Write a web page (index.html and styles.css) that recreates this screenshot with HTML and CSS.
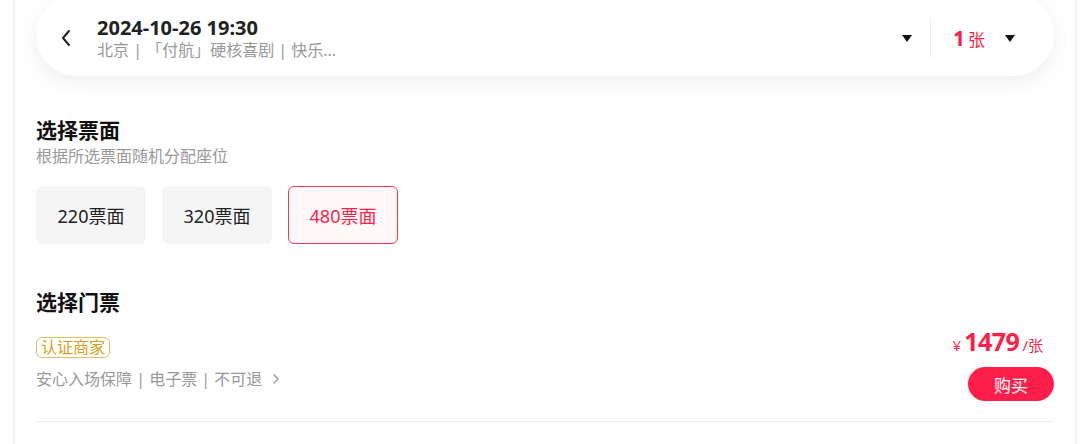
FILE: index.html
```html
<!DOCTYPE html>
<html lang="zh-CN">
<head>
  <meta charset="UTF-8">
  <title>选择票面</title>
  <link rel="stylesheet" href="styles.css">
</head>
<body>
  <div class="panel">
    <div class="top-card">
      <span class="back">
        <svg width="12" height="18" viewBox="0 0 12 18"><path d="M9 2 L3 9 L9 16" fill="none" stroke="#222" stroke-width="2" stroke-linecap="round" stroke-linejoin="round"/></svg>
      </span>
      <div class="show-info">
        <div class="show-time">2024-10-26 19:30</div>
        <div class="show-desc">北京 | 「付航」硬核喜剧 | 快乐...</div>
      </div>
      <span class="caret"></span>
      <span class="divider"></span>
      <div class="count"><b>1</b>张</div>
      <span class="caret"></span>
    </div>

    <div class="section">
      <h3>选择票面</h3>
      <p class="hint">根据所选票面随机分配座位</p>
      <div class="faces">
        <div class="face">220票面</div>
        <div class="face">320票面</div>
        <div class="face active">480票面</div>
      </div>
    </div>

    <div class="section tickets">
      <h3>选择门票</h3>
      <div class="ticket">
        <div class="ticket-left">
          <span class="badge">认证商家</span>
          <div class="terms">安心入场保障 | 电子票 | 不可退
            <svg width="8" height="12" viewBox="0 0 8 12"><path d="M2 2 L6 6 L2 10" fill="none" stroke="#999" stroke-width="1.4" stroke-linecap="round" stroke-linejoin="round"/></svg>
          </div>
        </div>
        <div class="ticket-right">
          <div class="price"><span class="yen">¥</span><b>1479</b><span class="unit">/张</span></div>
          <button class="buy">购买</button>
        </div>
      </div>
    </div>
  </div>
</body>
</html>
```

FILE: styles.css
```css
body { margin: 0; background: #fff; font-family: "Noto Sans", "Noto Sans CJK SC", sans-serif; color: #222; }
.panel { margin-left: 13px; width: 1018px; min-height: 444px; padding: 0 21px; border-left: 2px solid #f3f3f3; border-right: 2px solid #f3f3f3; overflow: hidden; }

.top-card { display: flex; align-items: center; height: 82px; margin-top: -6px; padding: 6px 39px 0 24px; box-sizing: border-box; background: #fff; border-radius: 41px; box-shadow: 0 6px 22px rgba(0,0,0,0.07); }
.back { display: flex; width: 12px; margin-right: 25px; }
.show-info { flex: 1; }
.show-time { font-size: 20px; font-weight: 700; line-height: 23px; color: #222; }
.show-desc { font-size: 16px; line-height: 22px; color: #999; }
.caret { width: 0; height: 0; border-left: 5px solid transparent; border-right: 5px solid transparent; border-top: 7px solid #111; }
.divider { width: 1px; height: 40px; background: #eee; margin: 0 22px 0 18px; }
.count { color: #ff1e4a; font-size: 17px; margin-right: 20px; }
.count b { font-size: 21px; font-weight: 700; margin-right: 3px; }

.section h3 { margin: 0; font-size: 21px; font-weight: 700; line-height: 28px; color: #111; }
.section { padding-top: 40px; }
.hint { margin: 0; font-size: 16px; line-height: 24px; color: #999; }
.faces { display: flex; gap: 16px; margin-top: 18px; }
.face { width: 110px; height: 58px; display: flex; align-items: center; justify-content: center; background: #f5f5f5; border-radius: 6px; font-size: 18px; color: #222; box-sizing: border-box; }
.face.active { background: #fff8f9; border: 1.5px solid #ff3355; color: #ff1e4a; }

.tickets { padding-top: 44px; }
.ticket { display: flex; justify-content: space-between; border-bottom: 1px solid #efefef; padding: 20px 0 20px; }
.badge { display: inline-block; font-size: 16px; line-height: 19px; padding: 0 4px; color: #d4a020; border: 1px solid #e2be5c; border-radius: 6px; }
.terms { margin-top: 10px; font-size: 16px; line-height: 22px; color: #999; display: flex; align-items: center; gap: 10px; }
.ticket-right { display: flex; flex-direction: column; align-items: flex-end; margin-top: -10px; }
.price { color: #ff1e4a; line-height: 30px; margin-right: 11px; }
.yen { font-size: 15px; margin-right: 3px; }
.price b { font-size: 25px; font-weight: 700; letter-spacing: -0.5px; }
.unit { font-size: 15px; margin-left: 3px; }
.buy { margin-top: 7px; width: 86px; height: 34px; border: none; border-radius: 17px; background: #ff1e4a; color: #fff; font-family: inherit; font-size: 17px; cursor: pointer; }
```
